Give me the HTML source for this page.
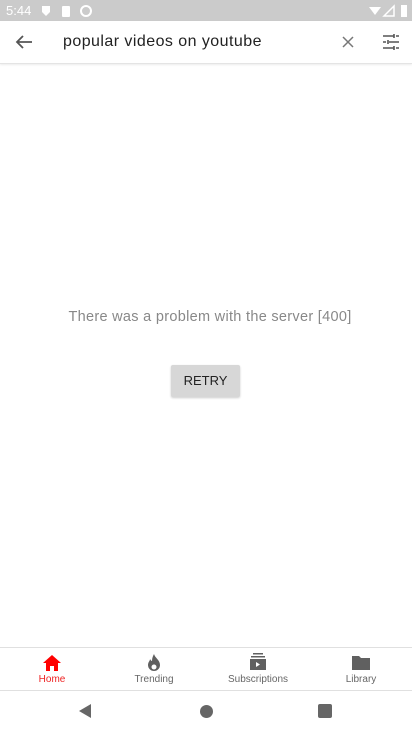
<html><head><style>
body{margin:0;width:412px;height:732px;background:#fff;font-family:"Liberation Sans",sans-serif;position:relative;overflow:hidden}
.a{position:absolute}
</style></head><body>
<div class="a" style="left:0;top:0;width:412px;height:21px;background:#cbcbcb"></div>
<div class="a" style="left:6px;top:3px;color:#fff;font-size:13px">5:44</div>
<svg class="a" style="left:40px;top:4px" width="60" height="14"><path d="M2 2h8v6l-4 4-4-4z" fill="#fff"/><rect x="22" y="2" width="8" height="11" rx="1" fill="#fff"/><circle cx="46" cy="7" r="5" stroke="#fff" stroke-width="2" fill="none"/></svg>
<svg class="a" style="left:368px;top:4px" width="42" height="14"><path d="M1 3h12l-6 8z" fill="#fff"/><path d="M16 12l10-10v10z" fill="none" stroke="#fff" stroke-width="1.5"/><rect x="33" y="1" width="6" height="12" fill="#fff"/></svg>
<div class="a" style="left:0;top:21px;width:412px;height:42px;border-bottom:1px solid #e4e4e4;box-shadow:0 1px 2px rgba(0,0,0,.08)"></div>
<svg class="a" style="left:14px;top:33px" width="20" height="18"><path d="M18 9H3M9 3L3 9l6 6" stroke="#555" stroke-width="1.8" fill="none"/></svg>
<div class="a" style="left:63px;top:33px;font-size:16px;letter-spacing:0.45px;color:#222">popular videos on youtube</div>
<svg class="a" style="left:341px;top:35px" width="14" height="14"><path d="M2 2l10 10M12 2L2 12" stroke="#777" stroke-width="1.5"/></svg>
<svg class="a" style="left:382px;top:33px" width="18" height="18"><path d="M1 3h11M14 3h3M1 9h3M7 9h10M1 15h11M14 15h3M12 1v4M6 7v4M12 13v4" stroke="#555" stroke-width="1.6"/></svg>
<div class="a" style="left:0;top:309px;width:420px;text-align:center;font-size:14.5px;letter-spacing:0.3px;color:#888">There was a problem with the server [400]</div>
<div class="a" style="left:171px;top:365px;width:69px;height:32px;background:#d7d7d7;box-shadow:0 1px 2px rgba(0,0,0,.2);border-radius:2px;text-align:center;line-height:32px;font-size:13px;color:#222">RETRY</div>
<div class="a" style="left:0;top:647px;width:412px;height:42px;border-top:1px solid #e0e0e0;border-bottom:1px solid #e0e0e0"></div>
<svg class="a" style="left:42px;top:654px" width="20" height="18"><path d="M10 1L1 9h3v8h4v-5h4v5h4V9h3z" fill="#f00"/></svg>
<div class="a" style="left:32px;top:674px;width:40px;text-align:center;font-size:10px;color:#e22">Home</div>
<svg class="a" style="left:146px;top:653px" width="16" height="20"><path d="M8 1c1 4 6 6 6 11a6 6 0 0 1-12 0c0-3 2-4 2-6 1 2 2 2 2 2 0-3 1-5 2-7z" fill="#606060"/><circle cx="8" cy="14" r="2.5" fill="#fff"/></svg>
<div class="a" style="left:124px;top:674px;width:60px;text-align:center;font-size:10px;color:#666">Trending</div>
<svg class="a" style="left:249px;top:653px" width="18" height="18"><rect x="4" y="0" width="10" height="1.5" fill="#606060"/><rect x="2" y="3" width="14" height="1.5" fill="#606060"/><rect x="1" y="6" width="16" height="11" fill="#606060"/><path d="M7 9v5l4-2.5z" fill="#fff"/></svg>
<div class="a" style="left:218px;top:674px;width:80px;text-align:center;font-size:10px;color:#666">Subscriptions</div>
<svg class="a" style="left:352px;top:655px" width="18" height="15"><path d="M0 1h7l2 2h9v12H0z" fill="#606060"/></svg>
<div class="a" style="left:336px;top:674px;width:50px;text-align:center;font-size:10px;color:#666">Library</div>
<svg class="a" style="left:78px;top:703px" width="14" height="16"><path d="M13 1v14L1 8z" fill="#666"/></svg>
<div class="a" style="left:200px;top:705px;width:13px;height:13px;border-radius:50%;background:#666"></div>
<div class="a" style="left:318px;top:704px;width:14px;height:14px;border-radius:2px;background:#666"></div>
</body></html>
